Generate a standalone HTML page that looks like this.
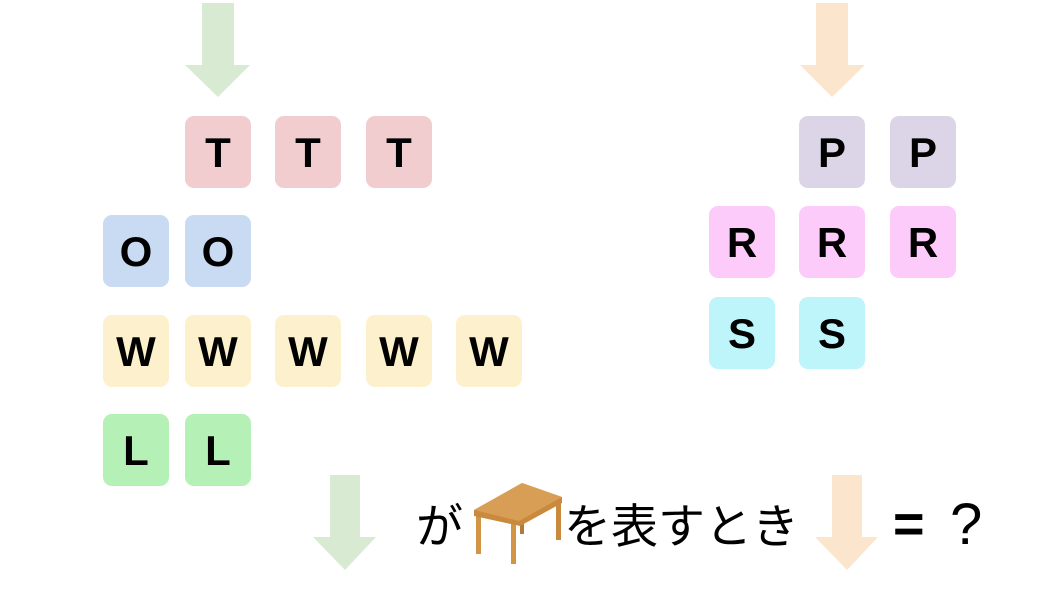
<!DOCTYPE html><html><head><meta charset="utf-8"><style>
body{margin:0;width:1060px;height:603px;background:#fff;position:relative;overflow:hidden;font-family:"Liberation Sans","Noto Sans CJK JP",sans-serif}
.t{position:absolute;width:66px;height:72px;border-radius:9px;display:flex;align-items:center;justify-content:center;font-weight:bold;font-size:42px;color:#000;padding-top:2px;box-sizing:border-box}
.T{background:#f2cdd0}.O{background:#c9daf3}.W{background:#fdf0cc}.L{background:#b5f1b6}.P{background:#dcd5e7}.R{background:#fdcbfa}.S{background:#bdf5fa}
.tx{position:absolute;font-size:44px;color:#000;line-height:1}
svg{position:absolute}
</style></head><body>
<svg style="left:0;top:0" width="1060" height="603">
<polygon points="202,3 234,3 234,65 250,65 218,97 185,65 202,65" fill="#d9ead3"/>
<polygon points="816,3 848,3 848,65 865,65 832,97 800,65 816,65" fill="#fce5cd"/>
<polygon points="330,475 360,475 360,537 376,537 345,570 313,537 330,537" fill="#d9ead3"/>
<polygon points="832,475 862,475 862,537 878,537 847,570 815,537 832,537" fill="#fce5cd"/>
<rect x="476" y="512" width="5" height="42" fill="#d19545"/>
<rect x="511" y="520" width="5" height="44" fill="#d19545"/>
<rect x="556" y="498" width="5" height="42" fill="#c98a3d"/>
<rect x="520" y="518" width="4" height="16" fill="#b57a35"/>
<polygon points="474,510 522,483 562,497 562,503 520,526 474,516" fill="#c98a3d"/>
<polygon points="474,510 522,483 562,497 519,521" fill="#d99e55"/>
</svg>
<div class="t T" style="left:185px;top:116px">T</div>
<div class="t T" style="left:275px;top:116px">T</div>
<div class="t T" style="left:366px;top:116px">T</div>
<div class="t O" style="left:103px;top:215px">O</div>
<div class="t O" style="left:185px;top:215px">O</div>
<div class="t W" style="left:103px;top:315px">W</div>
<div class="t W" style="left:185px;top:315px">W</div>
<div class="t W" style="left:275px;top:315px">W</div>
<div class="t W" style="left:366px;top:315px">W</div>
<div class="t W" style="left:456px;top:315px">W</div>
<div class="t L" style="left:103px;top:414px">L</div>
<div class="t L" style="left:185px;top:414px">L</div>
<div class="t P" style="left:799px;top:116px">P</div>
<div class="t P" style="left:890px;top:116px">P</div>
<div class="t R" style="left:709px;top:206px">R</div>
<div class="t R" style="left:799px;top:206px">R</div>
<div class="t R" style="left:890px;top:206px">R</div>
<div class="t S" style="left:709px;top:297px">S</div>
<div class="t S" style="left:799px;top:297px">S</div>
<div class="tx" style="left:416px;top:503px;font-size:47px">が</div>
<div class="tx" style="left:564px;top:503px;font-size:47px">を表すとき</div>
<div class="tx" style="left:893px;top:497px;font-weight:bold;font-size:54px">=</div>
<div class="tx" style="left:950px;top:496px;font-size:58px">?</div>
</body></html>
